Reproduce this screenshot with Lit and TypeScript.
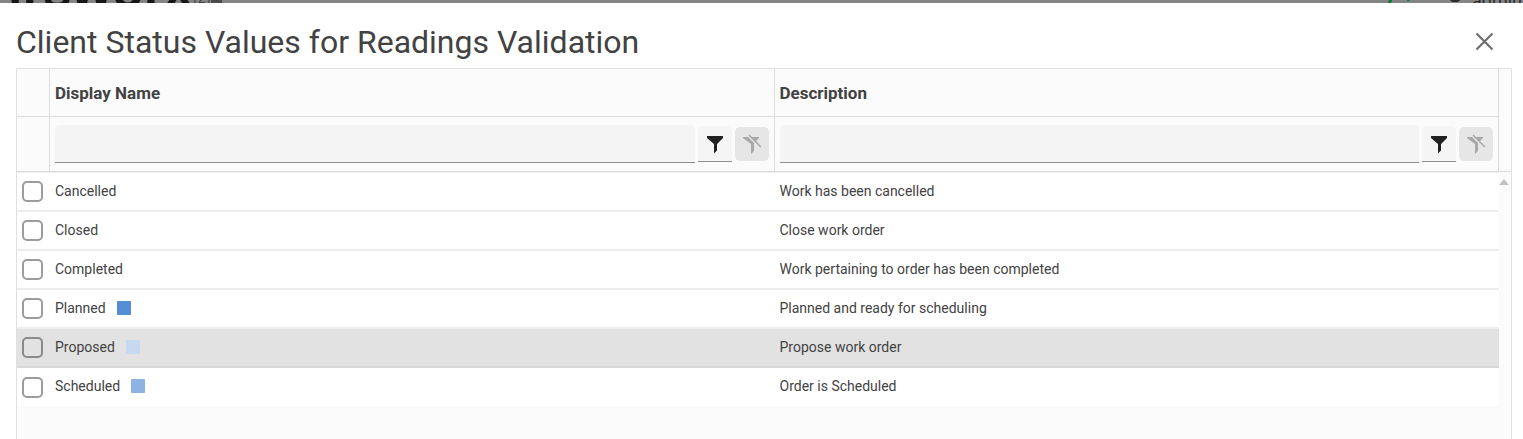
import { LitElement, html, css } from "lit";
import { customElement, property } from "lit/decorators.js";

interface StatusRow {
  name: string;
  description: string;
  color?: string;
  hovered?: boolean;
}

const ROWS: StatusRow[] = [
  { name: "Cancelled", description: "Work has been cancelled" },
  { name: "Closed", description: "Close work order" },
  { name: "Completed", description: "Work pertaining to order has been completed" },
  { name: "Planned", description: "Planned and ready for scheduling", color: "#548dd4" },
  { name: "Proposed", description: "Propose work order", color: "#c6d9f0", hovered: true },
  { name: "Scheduled", description: "Order is Scheduled", color: "#8db3e2" },
];

/* Text filter with its operator and clear buttons. */
@customElement("column-filter")
class ColumnFilter extends LitElement {
  static styles = css`
    :host { display: flex; align-items: center; gap: 3px; padding: 8px 5px; }
    .text {
      flex: 1; min-width: 0; height: 38px; box-sizing: border-box; margin: 0; padding: 0 8px;
      border: 0; border-bottom: 1px solid #8f8f8f; border-radius: 5px 5px 0 0;
      background: #f4f4f4; font: 14px Roboto, sans-serif; outline: none;
    }
    .btn {
      width: 34px; height: 36px; box-sizing: border-box; padding: 0; border: 0; flex: none;
      display: grid; place-items: center; background: #f5f5f5; color: #212121;
      border-bottom: 1px solid #8f8f8f; border-radius: 5px 5px 0 0;
    }
    .clear { height: 34px; border: 0; border-radius: 5px; background: #e6e6e6; color: #a8a8a8; }
    svg { display: block; }
  `;
  @property() label = "";
  render() {
    return html`
      <input class="text" type="text" aria-label=${"Filter " + this.label} />
      <button class="btn" aria-label="Filter operator">
        <svg width="18" height="20" viewBox="0 0 18 20">
          <path d="M1 2h16v2l-6 6v6.500l-3 3v-9.500l-7-6z" fill="currentColor" />
        </svg>
      </button>
      <button class="btn clear" aria-label="Clear filter" disabled>
        <svg width="20" height="22" viewBox="0 0 20 22">
          <path d="M1 4h5l6 6v8l-3 3v-10l-8-6z M9.500 4h7.500v1l-3.500 3.500z" fill="currentColor" />
          <path d="M7 2l12 12" stroke="currentColor" stroke-width="1.500" />
        </svg>
      </button>`;
  }
}

@customElement("app-root")
class AppRoot extends LitElement {
  static styles = css`
    :host {
      display: flex; flex-direction: column; height: 100vh; overflow: hidden;
      font: 14px/20px Roboto, sans-serif; color: #424242; background: #fff;
    }
    .backdrop {
      flex: none; height: 3px; overflow: hidden; background: #848484; color: #161616;
      display: flex; align-items: flex-end; justify-content: space-between; padding: 0 1px 0 8px;
    }
    .brand, .user { display: flex; align-items: flex-end; }
    .logo { font: bold 52px/40px "Liberation Sans", sans-serif; margin-bottom: -6px; }
    .ver { font-size: 14px; line-height: 16px; color: #444; margin-bottom: -3px; }
    .tag { width: 11px; height: 3px; background: #4a4a4a; }
    .user { color: #2b2b2b; }
    .mark { display: block; margin-right: 11px; }
    .name { font-size: 18px; line-height: 20px; margin-bottom: -8px; }
    .head { flex: none; display: flex; align-items: center; justify-content: space-between; padding: 19px 28px 6px 16px; }
    h1 { margin: 0; font-size: 32px; line-height: 40px; font-weight: 400; color: #424242; }
    .close { width: 20px; height: 20px; padding: 0; border: 0; background: none; color: #6e6e6e; }
    .close svg { display: block; }
    .grid {
      flex: 1; min-height: 0; display: flex; margin: 0 11px 0 16px;
      border: 1px solid #e0e0e0; border-bottom: 0; background: #fbfbfb;
    }
    table { flex: 1; width: 0; border-collapse: separate; border-spacing: 0; table-layout: fixed; align-self: flex-start; }
    th, td { padding: 0; text-align: left; box-sizing: border-box; }
    .sel { width: 33px; }
    thead th { border-right: 1px solid #dcdcdc; border-bottom: 1px solid #dcdcdc; }
    .titles th { height: 48px; padding: 0 5px; font-size: 17px; font-weight: 700; }
    .filters th { height: 55px; font-weight: 400; }
    td { height: 39px; padding: 0 5px 2px; background: #fff; border-bottom: 2px solid #eeeeee; }
    tbody tr:first-child td { height: 40px; border-top: 1px solid #eeeeee; }
    tbody tr:last-child td { height: 38px; border-bottom: 0; }
    .hovered td { background: #e2e2e2; border-bottom-color: #d8d8d8; }
    td.pick { padding: 0 0 0 5px; }
    .box {
      appearance: none; display: block; width: 21px; height: 21px; margin: 0; box-sizing: border-box;
      border: 2px solid #9c9c9c; border-radius: 5px;
    }
    .hovered .box { border-color: #8a8a8a; }
    .cell { display: flex; align-items: center; gap: 11px; }
    .swatch { width: 14px; height: 14px; border-radius: 1px; }
    .rail { flex: none; width: 12px; }
    .railhead { height: 103px; box-sizing: border-box; border-bottom: 1px solid #dcdcdc; }
    .up { width: 0; margin: 7px 0 0; border: 5px solid transparent; border-top: 0; border-bottom: 6px solid #c1c1c1; }
  `;
  render() {
    return html`
      <div class="backdrop">
        <div class="brand"><span class="logo">irsworx</span><span class="ver">(2)</span><span class="tag"></span></div>
        <div class="user">
          <svg class="mark" width="74" height="3" viewBox="0 0 74 3">
            <path d="M2 0h3l-1 3h-3z M20 0h3l-1 1h-2z" fill="#087a36" />
            <path d="M63 0h10q-1 2-5 2t-5-2z" fill="#2b2b2b" />
          </svg>
          <span class="name">admin</span>
        </div>
      </div>
      <header class="head">
        <h1>Client Status Values for Readings Validation</h1>
        <button class="close" aria-label="Close">
          <svg width="20" height="20" viewBox="0 0 20 20">
            <path d="M1.500 1.500l16 16M17.500 1.500l-16 16" stroke="currentColor" stroke-width="2.200" />
          </svg>
        </button>
      </header>
      <div class="grid">
        <table>
          <colgroup><col class="sel" /><col /><col /></colgroup>
          <thead>
            <tr class="titles"><th></th><th>Display Name</th><th>Description</th></tr>
            <tr class="filters">
              <th></th>
              <th><column-filter label="Display Name"></column-filter></th>
              <th><column-filter label="Description"></column-filter></th>
            </tr>
          </thead>
          <tbody>
            ${ROWS.map(
              (r) => html`<tr class=${r.hovered ? "hovered" : ""}>
                <td class="pick"><input class="box" type="checkbox" aria-label=${r.name} /></td>
                <td>
                  <div class="cell">
                    <span>${r.name}</span>
                    ${r.color ? html`<span class="swatch" style="background:${r.color}"></span>` : ""}
                  </div>
                </td>
                <td>${r.description}</td>
              </tr>`
            )}
          </tbody>
        </table>
        <div class="rail"><div class="railhead"></div><div class="up"></div></div>
      </div>`;
  }
}
